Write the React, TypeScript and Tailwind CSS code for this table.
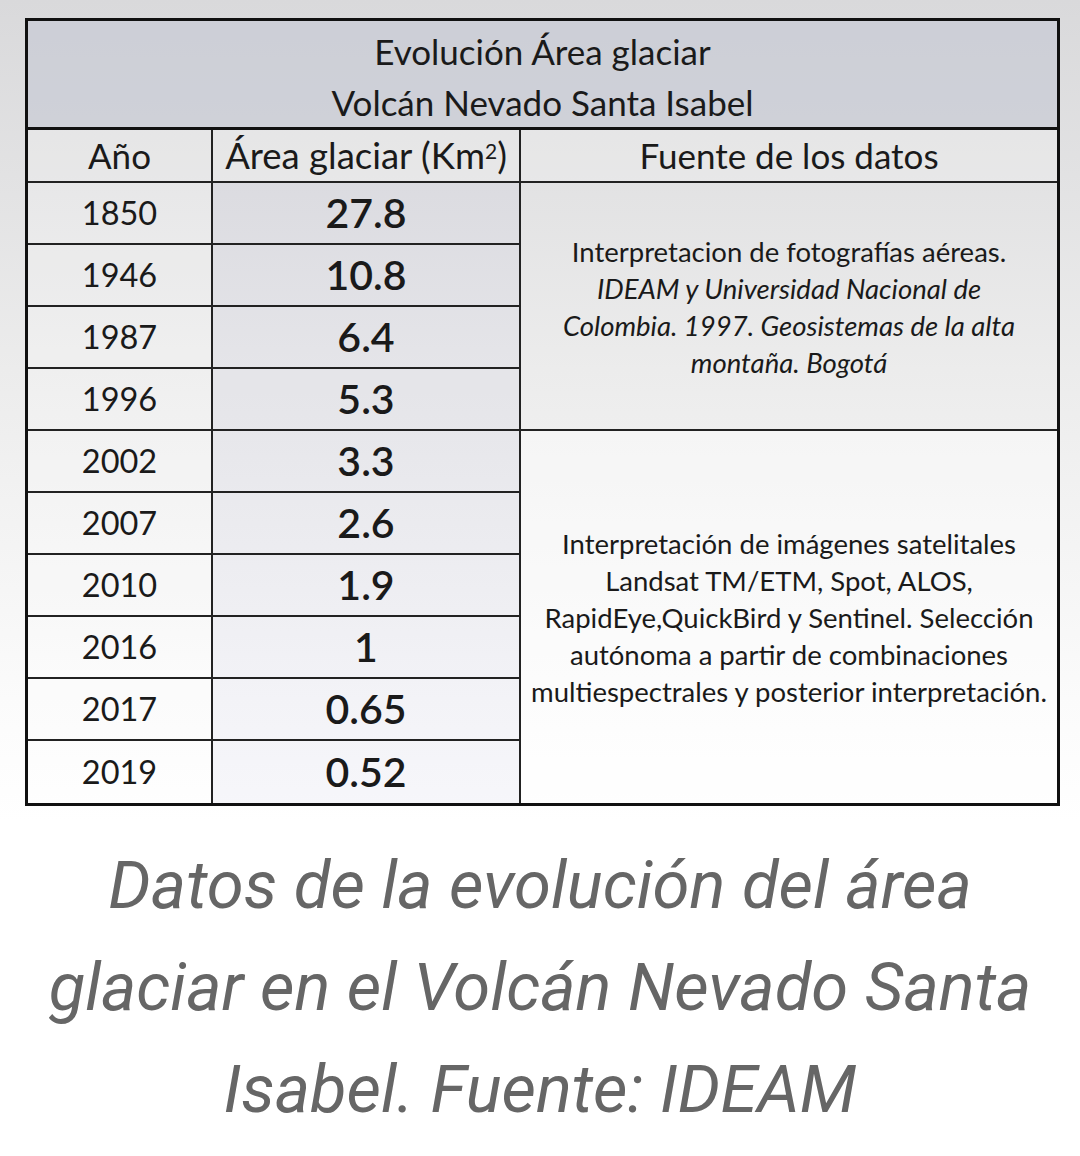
const ROWS: { year: string; area: string }[] = [
  { year: '1850', area: '27.8' },
  { year: '1946', area: '10.8' },
  { year: '1987', area: '6.4' },
  { year: '1996', area: '5.3' },
  { year: '2002', area: '3.3' },
  { year: '2007', area: '2.6' },
  { year: '2010', area: '1.9' },
  { year: '2016', area: '1' },
  { year: '2017', area: '0.65' },
  { year: '2019', area: '0.52' },
];

export default function App() {
  return (
    <div className="w-[1080px] min-h-[1156px] bg-white">
      {/* Table picture */}
      <div className="h-[822px] pt-[18px] pl-[25px] bg-[linear-gradient(to_bottom,#d9d9db,#ececec_45%,#fbfbfb_85%,#ffffff)]">
        <div className="w-[1035px] border-[3px] border-[#111] text-[#1a1a1a] font-['Lato','Liberation_Sans',sans-serif]">
          {/* Title */}
          <div className="h-[109px] border-b-[3px] border-[#111] bg-[#c8cbd4]/70 flex flex-col items-center justify-center text-[35px] leading-[51px] pt-[5px]">
            <div>Evolución Área glaciar</div>
            <div>Volcán Nevado Santa Isabel</div>
          </div>

          {/* Body */}
          <div className="grid grid-cols-[185px_308px_1fr] grid-rows-[53px_repeat(10,62px)]">
            <div className="border-r-2 border-b-2 border-[#222] flex items-center justify-center text-[35px] bg-white/20">
              Año
            </div>
            <div className="border-r-2 border-b-2 border-[#222] flex items-center justify-center text-[36.5px] bg-white/20">
              <span>
                Área glaciar (Km<sup className="text-[21px]">2</sup>)
              </span>
            </div>
            <div className="border-b-2 border-[#222] flex items-center justify-center text-[35px] bg-white/20">
              Fuente de los datos
            </div>

            {ROWS.map((r, i) => {
              const last = i === ROWS.length - 1;
              return [
                <div
                  key={r.year + 'y'}
                  style={{ gridRow: i + 2, gridColumn: 1 }}
                  className={`border-r-2 border-[#222] flex items-center justify-center text-[32.5px] bg-white/20 ${last ? '' : 'border-b-2'}`}
                >
                  {r.year}
                </div>,
                <div
                  key={r.year + 'a'}
                  style={{ gridRow: i + 2, gridColumn: 2 }}
                  className={`border-r-2 border-[#222] flex items-center justify-center text-[41px] font-semibold bg-[#5a5ab4]/[0.05] ${last ? '' : 'border-b-2'}`}
                >
                  {r.area}
                </div>,
              ];
            })}

            {/* Source 1 */}
            <div className="col-start-3 row-start-2 row-span-4 border-b-2 border-[#222] flex flex-col items-center justify-center text-center text-[27.5px] leading-[37px] pt-[2px]">
              <div>Interpretacion de fotografías aéreas.</div>
              <div className="italic">IDEAM y Universidad Nacional de</div>
              <div className="italic">Colombia. 1997. Geosistemas de la alta</div>
              <div className="italic">montaña. Bogotá</div>
            </div>

            {/* Source 2 */}
            <div className="col-start-3 row-start-6 row-span-6 flex flex-col items-center justify-center text-center text-[27.5px] leading-[37px] bg-white/40">
              <div>Interpretación de imágenes satelitales</div>
              <div>Landsat TM/ETM, Spot, ALOS,</div>
              <div>RapidEye,QuickBird y Sentinel. Selección</div>
              <div>autónoma a partir de combinaciones</div>
              <div>multiespectrales y posterior interpretación.</div>
            </div>
          </div>
        </div>
      </div>

      {/* Caption */}
      <p className="pt-[12px] px-[10px] text-center italic text-[#666666] text-[67px] leading-[102px] font-['Roboto','Liberation_Sans',sans-serif]">
        Datos de la evolución del área
        <br />
        glaciar en el Volcán Nevado Santa
        <br />
        Isabel. Fuente: IDEAM
      </p>
    </div>
  );
}
